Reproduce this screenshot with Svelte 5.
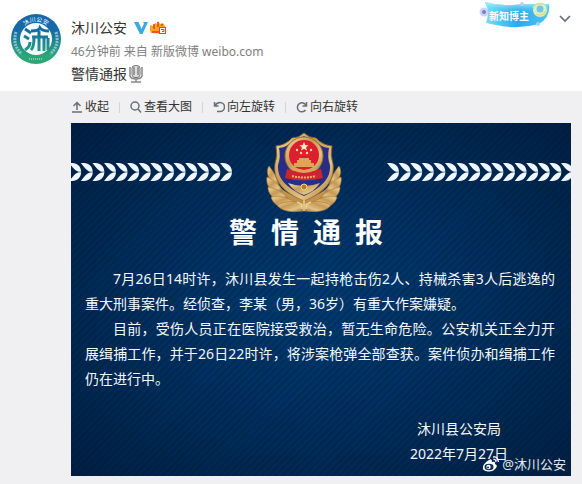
<script>
  const beads = Array.from({ length: 16 }, (_, i) => i);
  const title = ['警', '情', '通', '报'];
  const leaf = 'M0 0C7-0.500 11.500 2 12 8.700C7 9.500 4.500 5.500 0 0ZM0 18C7 18.500 11.500 16 12 9.300C7 8.500 4.500 12.500 0 18Z';
  const feathers = [
    'M8 51C1 46 0 39 3 34Q10 42 13 53Z',
    'M10 60C2 57 0 51 1 45Q11 49 17 59Z',
    'M15 68C6 67 2 61 2 55Q14 57 22 66Z',
    'M23 75C13 76 7 72 5 65Q18 62 30 71Z',
    'M38 79C25 81 15 79 11 73Q23 67 38 71Z'
  ];
</script>

<article class="post">
  <header>
    <a class="avatar" href="#profile" aria-label="沐川公安">
      <svg viewBox="0 0 50 50" width="50" height="50">
        <defs>
          <linearGradient id="ring" gradientUnits="userSpaceOnUse" x1="0" y1="0" x2="0" y2="50">
            <stop offset="0.3" stop-color="#1668a8" />
            <stop offset="0.85" stop-color="#2ba777" />
          </linearGradient>
          <path id="arc" d="M9 19A17 17 0 0 1 41 19" />
        </defs>
        <circle cx="25" cy="25" r="25" fill="url(#ring)" />
        <path d="M5 18Q1 32 11 40M45 18Q49 32 39 40" fill="none" stroke="#b5dde5" stroke-width="3" stroke-dasharray="2 1" opacity="0.7" />
        <circle cx="25" cy="25" r="16" fill="#f4fbfd" />
        <text class="seal" fill="#fff"><textPath href="#arc" startOffset="50%" text-anchor="middle">沐川公安</textPath></text>
        <g fill="none" stroke="url(#ring)" stroke-width="3">
          <path d="M14 15l6 4M13 22l5 3M14 36q5-3 5-8M20 17q8 0 9-3 2 3 9 3M21 23h16M28 17v20M23 24q0 9-3 12M33 24v13M37 24v12" />
        </g>
        <path d="M18 45h14" stroke="#d9f1e5" stroke-width="1" stroke-dasharray="1 1" />
      </svg>
    </a>
    <div class="info">
      <div class="name">
        <a href="#profile">沐川公安</a>
        <svg class="vee" viewBox="0 0 14 13" width="14" height="13" role="img" aria-label="认证">
          <path d="M0 0h4.500l3 7L10 1.500 9 0h5L8.500 12H6Z" fill="#3aaae4" />
        </svg>
        <svg class="crown" viewBox="0 0 17 14" width="17" height="14" role="img" aria-label="会员">
          <path d="M1 12Q-1 8 0 4l3 1 2-3 2 1 1-3 2 3 3-1 2 3v8Z" fill="#f9a51f" />
          <path d="M4 3v5M8 1v5M12 3v2" stroke="#e5432e" stroke-width="1.500" />
          <path d="M2 10h7v2H2Z" fill="#e9572b" />
          <rect x="9.500" y="6.500" width="6" height="6" fill="#fff" stroke="#e5432e" />
          <path d="M11 8.500h3v2h-2" fill="none" stroke="#e5432e" />
        </svg>
      </div>
      <div class="meta"><a href="#post">46分钟前</a> 来自 <a href="#source">新版微博 weibo.com</a></div>
      <p class="caption">警情通报<svg viewBox="0 0 14 18" width="14" height="18" role="img" aria-label="话筒">
          <rect x="3" y="0.500" width="8" height="12" rx="3" fill="#ddd" stroke="#777" />
          <path d="M4 3h2M8 3h2M4 5h2M8 5h2M4 7h2M8 7h2M4 9h2M8 9h2" stroke="#555" />
          <path d="M1 2v9q1 3 6 3t6-3V2M7 14v3M2 17h10" fill="none" stroke="#888" stroke-width="1.500" />
        </svg></p>
    </div>
    <div class="corner">
      <svg class="badge" viewBox="0 0 72 28" width="72" height="28">
        <defs>
          <linearGradient id="ribbon"><stop stop-color="#6fe4f2" /><stop offset="0.5" stop-color="#2da9f0" /><stop offset="1" stop-color="#4dc7ef" /></linearGradient>
          <linearGradient id="shine" x1="0" y1="0" x2="0" y2="1"><stop stop-color="#b3f2fa" /><stop offset="1" stop-color="#5dcaf3" stop-opacity="0" /></linearGradient>
        </defs>
        <path d="M6 2Q20 6 34 5T70 4Q72 17 60 24 38 30 17 25L7 23Q11 12 6 2Z" fill="url(#ribbon)" />
        <path d="M6 2Q20 6 34 5T70 4L69 10Q40 15 9 9Z" fill="url(#shine)" />
        <circle cx="5" cy="12" r="4.500" fill="#cad5f5" /><circle cx="5" cy="12" r="2" fill="#6c83d3" />
        <circle cx="43" cy="4" r="2" fill="#bfd0ee" />
        <circle cx="61" cy="10" r="7" fill="#d8f0c8" /><circle cx="61" cy="9" r="3.500" fill="#76c6df" />
        <path d="M54 8q3-6 11-4M57 14q6 3 10-3" fill="none" stroke="#e8dc7a" stroke-width="1.500" />
        <circle cx="59" cy="24" r="2" fill="#9ed6f5" />
        <text class="badge-text" x="10" y="20" fill="#fff">新知博主</text>
      </svg>
      <button class="more" aria-label="更多">
        <svg viewBox="0 0 12 8" width="12" height="8"><path d="M1 1l5 5 5-5" fill="none" stroke="#696e78" stroke-width="1.700" /></svg>
      </button>
    </div>
  </header>

  <section class="media">
    <div class="tools">
      <button>
        <svg viewBox="0 0 12 12" width="12" height="12"><path d="M6 9V1.500M2.500 5L6 1.500 9.500 5M1 11H11" /></svg>收起
      </button>
      <button>
        <svg viewBox="0 0 12 12" width="12" height="12"><circle cx="5" cy="5" r="4" /><path d="M8 8l3 3.500" /></svg>查看大图
      </button>
      <button>
        <svg viewBox="0 0 12 12" width="12" height="12"><path d="M1.500 1v4h4M2 4.500Q4 1.500 7 1.500A4.500 4.500 0 0 1 7 10.500H4" /></svg>向左旋转
      </button>
      <button>
        <svg viewBox="0 0 12 12" width="12" height="12"><path d="M10.500 1v4h-4M10 4.500A4.500 4.500 0 1 0 9.500 9" /></svg>向右旋转
      </button>
    </div>

    <div class="notice">
      <div class="crest">
        <svg class="chevrons left" viewBox="0 0 161 18" preserveAspectRatio="xMaxYMid slice" aria-hidden="true">
          {#each beads as i}<path d={leaf} transform="translate({149 - i * 11.6} 0)" />{/each}
        </svg>
        <svg class="emblem" viewBox="0 0 76 80" width="76" height="80" role="img" aria-label="警徽">
          <defs>
            <linearGradient id="gold" x1="0" y1="0" x2="1" y2="1">
              <stop stop-color="#f3dda0" /><stop offset="0.4" stop-color="#c79a55" /><stop offset="0.7" stop-color="#e3c282" /><stop offset="1" stop-color="#a06c30" />
            </linearGradient>
            <g id="wing" fill="url(#gold)" stroke="#a87738" stroke-width="0.600">
              {#each feathers as d}<path {d} />{/each}
            </g>
          </defs>
          <path d="M6 46Q14 60 38 68Q62 60 70 46L66 70Q38 84 10 70Z" fill="#c1914f" />
          <use href="#wing" />
          <use href="#wing" transform="translate(76 0) scale(-1 1)" />
          <path d="M38 1Q43 6 50 6Q56 13 66 14Q64 23 67 32C69 49 58 61 38 69C18 61 7 49 9 32Q12 23 10 14Q20 13 26 6Q33 6 38 1Z" fill="url(#gold)" stroke="#9b692e" stroke-width="0.800" />
          <path d="M38 4Q43 8 49 8Q54 15 63 16Q61 25 64 33C65 47 55 56 38 64C21 56 11 47 12 33Q15 25 13 16Q22 15 27 8Q33 8 38 4Z" fill="#292d83" />
          <path d="M22 51Q30 54 38 54T54 51Q48 60 38 63Q28 60 22 51Z" fill="url(#gold)" />
          <circle cx="38" cy="55" r="3" fill="#b57a2b" stroke="#f4d88d" />
          <circle cx="38" cy="24" r="19" fill="url(#gold)" stroke="#a36e31" />
          <circle cx="38" cy="23" r="15" fill="#dc1e2d" />
          <path d="M38 10l1.300 3 3.300.2-2.500 2.100.8 3.200-2.900-1.800-2.900 1.800.8-3.200-2.500-2.100 3.300-.2Z" fill="#ffeabc" />
          <g fill="#ffe099"><circle cx="31" cy="18" r="1.200" /><circle cx="35" cy="21" r="1.200" /><circle cx="41" cy="21" r="1.200" /><circle cx="45" cy="18" r="1.200" /></g>
          <path d="M33 26h10v2h2v3h3v4H28v-4h3v-3h2Z" fill="#dfa456" />
          <path d="M21 37q17 5 34 0l2 9q-19 5-38 0Z" fill="#cc2430" />
          <path d="M27 37q11 5 22 0" fill="none" stroke="#dfa456" stroke-width="3" />
          <path d="M26 44q12 3 24 0" fill="none" stroke="#edb45e" stroke-width="2" stroke-dasharray="2 1" />
          <path d="M38 68v11M31 70q5 1 5 7M45 70q-5 1-5 7" fill="none" stroke="#ecd092" stroke-width="1.500" />
        </svg>
        <svg class="chevrons right" viewBox="0 0 184 18" preserveAspectRatio="xMinYMid slice" aria-hidden="true">
          {#each beads as i}<path d={leaf} transform="translate({i * 11.6} 0)" />{/each}
        </svg>
      </div>
      <h1>{#each title as c}<span>{c}</span>{/each}</h1>
      <p>7月26日14时许，沐川县发生一起持枪击伤2人、持械杀害3人后逃逸的重大刑事案件。经侦查，李某（男，36岁）有重大作案嫌疑。</p>
      <p>目前，受伤人员正在医院接受救治，暂无生命危险。公安机关正全力开展缉捕工作，并于26日22时许，将涉案枪弹全部查获。案件侦办和缉捕工作仍在进行中。</p>
      <footer>
        <div>沐川县公安局</div>
        <div>2022年7月27日</div>
      </footer>
      <div class="watermark">
        <svg viewBox="0 0 18 16" width="18" height="16" aria-hidden="true">
          <path d="M7 4Q10 2 10 6Q14 5 13 8Q16 9 14 12Q11 16 6 15.500Q0 15 1 10.500Q2 7 7 4Z" fill="#fff" />
          <ellipse cx="7" cy="11" rx="4.500" ry="3.300" fill="#0a2c55" />
          <circle cx="6.500" cy="11" r="2.200" fill="#fff" /><circle cx="6" cy="11.500" r="1" fill="#0a2c55" />
          <path d="M11 1Q16 0 16.500 6M11.500 3.500Q14 3 14 6" fill="none" stroke="#fff" stroke-width="1.300" />
        </svg>
        <span>@沐川公安</span>
      </div>
    </div>
  </section>
</article>

<style>
  :global(body) {
    margin: 0;
    background: #f0f0f2;
  }
  .post {
    font-family: 'Noto Sans', 'Noto Sans CJK SC', sans-serif;
    font-size: 12px;
    color: #333;
    background: #f0f0f2;
  }
  svg {
    display: block;
    flex: none;
  }
  a {
    color: inherit;
    text-decoration: none;
  }
  button {
    font: inherit;
    color: inherit;
    background: none;
    border: 0;
    padding: 0;
    cursor: pointer;
  }
  header {
    display: flex;
    gap: 10px;
    height: 91px;
    padding: 0 11px;
    box-sizing: border-box;
    background: #fff;
  }
  .avatar {
    padding-top: 14px;
  }
  .seal {
    font-size: 6px;
  }
  .info {
    flex: 1;
    padding-top: 18px;
  }
  .name {
    display: flex;
    align-items: center;
    font-size: 14px;
    line-height: 20px;
  }
  .vee {
    margin-left: 7px;
  }
  .crown {
    margin-left: 2px;
  }
  .meta {
    margin-top: 4px;
    line-height: 20px;
    color: #808080;
  }
  .caption {
    display: flex;
    align-items: center;
    gap: 2px;
    margin: 2px 0 0;
    font-size: 14px;
    line-height: 20px;
  }
  .corner {
    display: flex;
    align-items: flex-start;
    gap: 8px;
  }
  .badge-text {
    font-size: 10px;
    font-weight: 700;
  }
  .more {
    padding-top: 15px;
  }
  .media {
    padding: 0 11px 8px 71px;
  }
  .tools {
    display: flex;
    align-items: center;
    height: 32px;
  }
  .tools button {
    display: flex;
    align-items: center;
    gap: 2px;
    line-height: 16px;
  }
  .tools button + button {
    margin-left: 10px;
    position: relative;
    padding-left: 11px;
  }
  .tools button + button::before {
    content: '';
    position: absolute;
    left: 0;
    top: 3px;
    width: 1px;
    height: 11px;
    background: #d4d4d8;
  }
  .tools svg {
    fill: none;
    stroke: #696e78;
    stroke-width: 1.5;
  }
  .notice {
    position: relative;
    padding: 9px 0 10px;
    color: #f4f8ff;
    font-size: 14px;
    line-height: 25px;
    background:
      repeating-linear-gradient(135deg, transparent 0 3px, rgba(0, 12, 35, 0.16) 3px 5px),
      radial-gradient(ellipse at 50% 50%, #003a70 0%, #00305f 45%, #001f42 100%);
  }
  .crest {
    display: flex;
    align-items: center;
  }
  .chevrons {
    height: 18px;
    min-width: 0;
    fill: #eef6ff;
  }
  .left {
    flex: 161 1 0;
    margin-right: 34px;
  }
  .right {
    flex: 184 1 0;
    margin-left: 45px;
  }
  h1 {
    display: flex;
    justify-content: center;
    gap: 14px;
    margin: 0 30px 14px 0;
    font-size: 28px;
    line-height: 40px;
    color: #fff;
  }
  .notice p {
    margin: 0;
    padding: 0 16px 0 14px;
    text-indent: 28px;
    text-align: justify;
  }
  footer {
    width: 98px;
    margin: 25px 63px 0 auto;
    text-align: center;
    white-space: nowrap;
  }
  .watermark {
    position: absolute;
    right: 5px;
    bottom: 3px;
    display: flex;
    align-items: center;
    gap: 2px;
    font-size: 13px;
    line-height: 18px;
    color: #e3e8ef;
  }
</style>
